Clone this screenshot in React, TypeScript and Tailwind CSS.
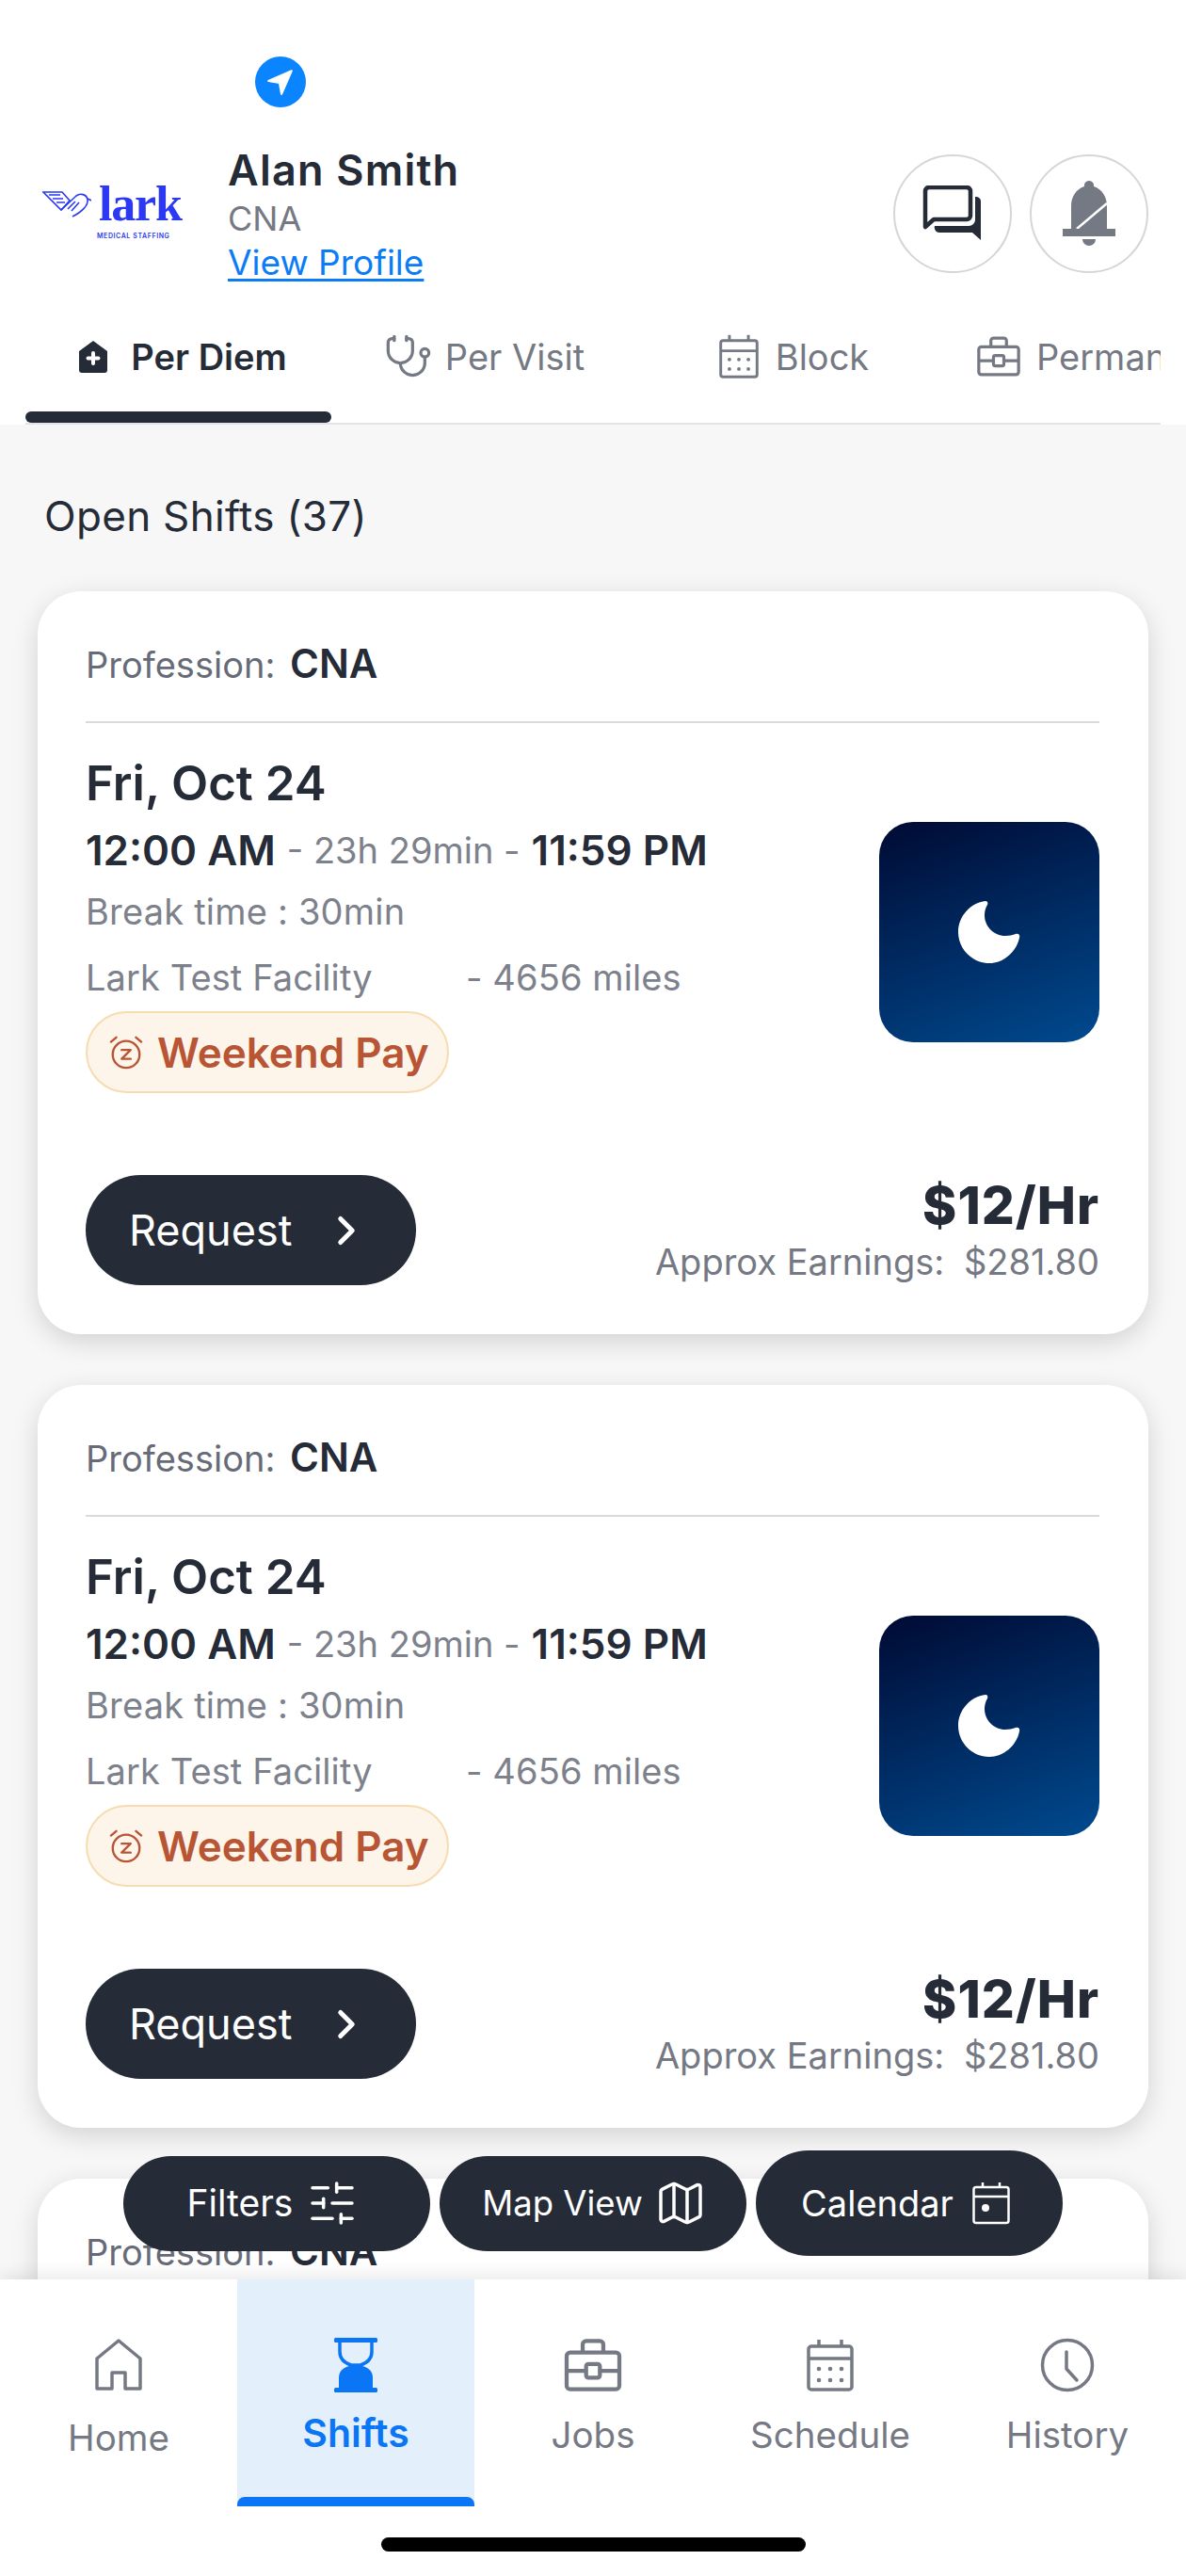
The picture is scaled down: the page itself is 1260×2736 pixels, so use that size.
import { ChevronRight, Map, SlidersHorizontal, Stethoscope } from 'lucide-react';

const LarkLogo = () => (
  <div className="w-[197px] shrink-0 mt-[36px] flex flex-col">
    <div className="flex items-center h-[50px]">
      <svg viewBox="0 0 52 30" className="w-[52px] h-[30px] shrink-0" fill="none" stroke="#2b39f5" strokeWidth="1.6">
        <path d="M1 2h20l8 9-9 10L1 2z" />
        <path d="M7 5h12M11 9h11M15 13h9" />
        <path d="M20 21 36 6c4-3 11-2 12 4 1 6-6 13-16 18" />
        <path d="M27 20l8-8M31 22l8-9" />
        <path d="M48 9l4 2" />
      </svg>
      <span className="ml-[8px] text-[52px] leading-[50px] font-bold tracking-[-1.2px] text-[#2b39f5] font-['Liberation_Serif',serif]">lark</span>
    </div>
    <span className="ml-[58px] mt-[4px] text-[7px] leading-[9px] font-semibold tracking-[0.6px] text-[#2b39f5] whitespace-nowrap">MEDICAL STAFFING</span>
  </div>
);

const NavArrow = () => (
  <div className="w-[54px] h-[54px] rounded-full bg-[#0a84ff] flex items-center justify-center">
    <svg viewBox="0 0 30 30" className="w-[32px] h-[32px]" fill="#fff" stroke="#fff" strokeWidth="2" strokeLinejoin="round">
      <path d="M26 4 3 14l11 2 2 11L26 4z" />
    </svg>
  </div>
);

const ChatIcon = () => (
  <svg viewBox="0 0 64 60" className="w-[64px] h-[60px]" fill="none">
    <path d="M3 44V6a4 4 0 0 1 4-4h40a4 4 0 0 1 4 4v26a4 4 0 0 1-4 4H12l-9 8z" stroke="#252b37" strokeWidth="4.5" strokeLinejoin="round" />
    <path d="M56 12c4 0 6 2 6 5v41l-9-8H18c-4 0-6-4-5-7h36c4 0 7-3 7-7V12z" fill="#252b37" />
  </svg>
);

const BellIcon = () => (
  <svg viewBox="0 0 56 70" className="w-[56px] h-[70px]">
    <path d="M28 0a5 5 0 0 1 5 6c9 3 14 11 14 21v24H9V27C9 17 14 9 23 6a5 5 0 0 1 5-6z" fill="#757983" />
    <path d="M47 24 15 51" stroke="#fff" strokeWidth="2.5" />
    <rect x="0" y="51" width="56" height="8" fill="#757983" />
    <path d="M21 62h14a7 7 0 0 1-14 0z" fill="#757983" />
  </svg>
);

const HospitalIcon = () => (
  <svg viewBox="0 0 30 34" className="w-[30px] h-[34px] shrink-0">
    <path d="M15 0 30 11v20a3 3 0 0 1-3 3H3a3 3 0 0 1-3-3V11L15 0z" fill="#252b37" />
    <path d="M15 13v11M9.500 18.500h11" stroke="#fff" strokeWidth="4" strokeLinecap="round" />
  </svg>
);

const CalendarIcon = ({ className }: { className: string }) => (
  <svg viewBox="0 0 50 56" className={className} fill="none" stroke="#757983" strokeWidth="3.500">
    <rect x="2" y="8" width="46" height="46" rx="3" />
    <path d="M2 21h46M13 1v7M37 1v7" />
    <g fill="#757983" stroke="none">
      <circle cx="13" cy="32" r="2.300" />
      <circle cx="25" cy="32" r="2.300" />
      <circle cx="37" cy="32" r="2.300" />
      <circle cx="13" cy="44" r="2.300" />
      <circle cx="25" cy="44" r="2.300" />
      <circle cx="37" cy="44" r="2.300" />
    </g>
  </svg>
);

const BriefcaseIcon = ({ className }: { className: string }) => (
  <svg viewBox="0 0 50 46" className={className} fill="none" stroke="#757983" strokeWidth="3.500" strokeLinejoin="round">
    <rect x="2" y="12" width="46" height="32" rx="3" />
    <path d="M16 12V5a3 3 0 0 1 3-3h12a3 3 0 0 1 3 3v7" />
    <path d="M2 28h17M31 28h17" />
    <rect x="19" y="22" width="12" height="12" rx="2" />
  </svg>
);

const tabs = [
  { label: 'Per Diem', icon: <HospitalIcon />, style: 'gap-[25px] pl-[10px]', active: true },
  { label: 'Per Visit', icon: <Stethoscope className="w-[52px] h-[52px] text-[#757983] shrink-0" strokeWidth={1.500} />, style: 'gap-[13px]', active: false },
  { label: 'Block', icon: <CalendarIcon className="w-[42px] h-[47px] shrink-0" />, style: 'gap-[18px] pl-[8px]', active: false },
];

const Header = () => (
  <header className="bg-white pt-[60px]">
    <div className="ml-[271px]">
      <NavArrow />
    </div>
    <div className="flex mt-[42px] pl-[45px] pr-[40px]">
      <LarkLogo />
      <div className="flex-1 flex flex-col">
        <span className="text-[45px] leading-[50px] font-semibold tracking-[1.2px] text-[#252b37]">Alan Smith</span>
        <span className="mt-[4px] text-[36px] leading-[44px] text-[#757983]">CNA</span>
        <span className="mt-[3px] text-[37px] leading-[44px] text-[#0a7cf5] underline underline-offset-[4px]">View Profile</span>
      </div>
      <div className="flex gap-[19px] mt-[8px]">
        <div className="w-[126px] h-[126px] rounded-full border-[2.500px] border-[#d5d6da] flex items-center justify-center">
          <ChatIcon />
        </div>
        <div className="w-[126px] h-[126px] rounded-full border-[2.500px] border-[#d5d6da] flex items-center justify-center">
          <BellIcon />
        </div>
      </div>
    </div>
    <div className="mt-[39px] mx-[27px] flex overflow-hidden border-b-2 border-[#e3e4e7]">
      {tabs.map((tab) => (
        <div key={tab.label} className="w-[325px] shrink-0 h-[109px] flex flex-col">
          <div className={`flex-1 flex items-center justify-center pb-[20px] ${tab.style}`}>
            {tab.icon}
            <span className={`text-[38px] leading-[44px] whitespace-nowrap ${tab.active ? 'font-semibold text-[#252b37]' : 'text-[#757983]'}`}>{tab.label}</span>
          </div>
          <div className={`h-[12px] rounded-full ${tab.active ? 'bg-[#252b37]' : ''}`} />
        </div>
      ))}
      <div className="shrink-0 h-[109px] flex items-center gap-[17px] pl-[36px] pb-[32px]">
        <BriefcaseIcon className="w-[46px] h-[43px] shrink-0" />
        <span className="text-[38px] leading-[44px] whitespace-nowrap text-[#757983]">Permanent</span>
      </div>
    </div>
  </header>
);

const ShiftCard = () => (
  <div className="bg-white rounded-[46px] pt-[52px] pb-[52px] pl-[51px] pr-[52px] shadow-[0_8px_28px_rgba(0,0,0,0.15)]">
    <div className="text-[38px] leading-[50px] text-[#666b77]">
      Profession: <span className="ml-[5px] text-[42px] font-semibold text-[#252b37]">CNA</span>
    </div>
    <div className="mt-[35px] h-[2px] bg-[#d9dadd]" />
    <div className="flex justify-between">
      <div className="flex flex-col items-start">
        <div className="mt-[36px] text-[51px] leading-[56px] font-semibold text-[#252b37]">Fri, Oct 24</div>
        <div className="mt-[18px] flex items-center h-[50px] whitespace-nowrap">
          <span className="text-[44px] font-semibold text-[#252b37]">12:00 AM</span>
          <span className="mx-[12px] text-[38px] text-[#7d818c]">- 23h 29min -</span>
          <span className="text-[44px] font-semibold text-[#252b37]">11:59 PM</span>
        </div>
        <div className="mt-[17px] text-[38px] tracking-[0.2px] leading-[46px] text-[#7d818c]">Break time : 30min</div>
        <div className="mt-[24px] flex text-[38px] tracking-[0.1px] leading-[46px] text-[#7d818c] whitespace-nowrap">
          <span className="w-[404px]">Lark Test Facility</span>
          <span>- 4656 miles</span>
        </div>
        <div className="mt-[13px] h-[87px] w-[386px] rounded-full bg-[#fdf4ea] border-[2.500px] border-[#f6dcb0] flex items-center pl-[22px] gap-[14px]">
          <svg viewBox="0 0 40 40" className="w-[38px] h-[38px] shrink-0" fill="none" stroke="#b85534" strokeWidth="2.500" strokeLinecap="round" strokeLinejoin="round">
            <circle cx="20" cy="22" r="15" />
            <path d="M3 8l6-5M37 8l-6-5" />
            <path d="M15 17h10L15 27h10" />
          </svg>
          <span className="text-[44px] font-semibold text-[#b85534] whitespace-nowrap">Weekend Pay</span>
        </div>
      </div>
      <div className="mt-[105px] w-[234px] h-[234px] rounded-[36px] bg-[linear-gradient(160deg,#000a33,#004a8f)] flex items-center justify-center shrink-0">
        <svg viewBox="0 0 66 66" className="w-[66px] h-[66px]" fill="#fff">
          <path d="M29 0c2 0 3 2 2 4-2 3-3 7-3 11 0 12 10 22 22 22 4 0 8-1 11-2 3-1 5 1 4 4-3 15-17 27-32 27C15 66 0 51 0 33 0 16 13 2 29 0z" />
        </svg>
      </div>
    </div>
    <div className="mt-[87px] h-[117px] flex justify-between items-start">
      <div className="w-[351px] h-[117px] rounded-full bg-[#252b37] flex items-center pl-[46px] gap-[33px]">
        <span className="text-[45px] text-white">Request</span>
        <ChevronRight className="w-[50px] h-[50px] text-white" strokeWidth={2.400} />
      </div>
      <div className="flex flex-col items-end pt-[2px]">
        <span className="text-[55px] leading-[60px] tracking-[1px] font-extrabold text-[#252b37]">$12/Hr</span>
        <span className="text-[38px] leading-[60px] text-[#757983] whitespace-nowrap">
          Approx Earnings: <span className="ml-[10px]">$281.80</span>
        </span>
      </div>
    </div>
  </div>
);

const FloatButton = ({ label, icon, className }: { label: string; icon: React.ReactNode; className: string }) => (
  <div className={`w-[326px] rounded-full bg-[#252b37] flex items-center justify-center text-white ${className}`}>
    <span className="whitespace-nowrap">{label}</span>
    {icon}
  </div>
);

const navItems = [
  {
    label: 'Home',
    icon: (
      <svg viewBox="0 0 50 56" className="w-[50px] h-[56px]" fill="none" stroke="#757983" strokeWidth="3.500" strokeLinejoin="round">
        <path d="M25 2 48 21v32H32V36H18v17H2V21L25 2z" />
      </svg>
    ),
  },
  {
    label: 'Shifts',
    icon: (
      <svg viewBox="0 0 46 58" className="w-[46px] h-[58px]" fill="#0a75f5">
        <rect x="0" y="0" width="46" height="5" rx="1.500" />
        <rect x="0" y="53" width="46" height="5" rx="1.500" />
        <path d="M6 3v12c0 8 6 12 12 14h10c6-2 12-6 12-14V3" fill="none" stroke="#0a75f5" strokeWidth="3.500" />
        <path d="M5 54V42c0-8 8-13 18-13s18 5 18 13v12H5z" />
      </svg>
    ),
  },
  { label: 'Jobs', icon: <BriefcaseIcon className="w-[62px] h-[56px]" /> },
  { label: 'Schedule', icon: <CalendarIcon className="w-[50px] h-[58px]" /> },
  {
    label: 'History',
    icon: (
      <svg viewBox="0 0 58 58" className="w-[58px] h-[58px]" fill="none" stroke="#757983" strokeWidth="3.500" strokeLinecap="round" strokeLinejoin="round">
        <circle cx="29" cy="29" r="26.500" />
        <path d="M28 15v18l11 12" />
      </svg>
    ),
  },
];

const BottomNav = () => (
  <nav className="relative bg-white h-[315px] shadow-[0_-6px_16px_rgba(0,0,0,0.08)]">
    <div className="grid grid-cols-5 h-[241px]">
      {navItems.map((item) => {
        const active = item.label === 'Shifts';
        return (
          <div key={item.label} className={`relative flex flex-col items-center pt-[62px] ${active ? 'bg-[#e3f0fc]' : ''}`}>
            <div className="h-[58px] flex items-center">{item.icon}</div>
            <span
              className={`leading-[50px] ${
                active ? 'mt-[18px] text-[41px] font-semibold text-[#0a75f5]' : item.label === 'Home' ? 'mt-[23px] text-[38.500px] text-[#757983]' : 'mt-[20px] text-[38.500px] text-[#757983]'
              }`}
            >
              {item.label}
            </span>
            {active && <div className="absolute left-0 right-0 bottom-0 h-[10px] rounded-t-[8px] bg-[#0a75f5]" />}
          </div>
        );
      })}
    </div>
    <div className="mt-[33px] mx-auto w-[451px] h-[15px] rounded-full bg-black" />
  </nav>
);

export default function App() {
  return (
    <div className="relative w-[1260px] h-[2736px] overflow-hidden flex flex-col bg-[#f7f7f7] font-['Inter',sans-serif]">
      <Header />
      <main className="flex-1 overflow-hidden">
        <h2 className="mt-[72px] ml-[47px] text-[44px] tracking-[0.3px] leading-[50px] text-[#252b37]">Open Shifts (37)</h2>
        <div className="mt-[55px] mx-[40px] flex flex-col gap-[54px]">
          <ShiftCard />
          <ShiftCard />
          <ShiftCard />
        </div>
      </main>
      <BottomNav />
      <div className="absolute left-[131px] top-[2284px] h-[112px] flex items-center gap-[10px]">
        <FloatButton
          label="Filters"
          className="h-[101px] gap-[14px] pr-[8px] text-[39px]"
          icon={<SlidersHorizontal className="w-[56px] h-[56px]" strokeWidth={1.500} />}
        />
        <FloatButton label="Map View" className="h-[101px] gap-[12px] pl-[3px] text-[36.500px]" icon={<Map className="w-[56px] h-[56px]" strokeWidth={1.500} />} />
        <FloatButton
          label="Calendar"
          className="h-[112px] gap-[20px] pr-[8px] text-[38px]"
          icon={
            <svg viewBox="0 0 40 46" className="w-[40px] h-[46px]" fill="none" stroke="#fff" strokeWidth="2.500">
              <rect x="1.500" y="6" width="37" height="38" rx="2.500" />
              <path d="M1.500 16h37M11 1v5M29 1v5" />
              <circle cx="14" cy="28" r="4" fill="#fff" stroke="none" />
            </svg>
          }
        />
      </div>
    </div>
  );
}
